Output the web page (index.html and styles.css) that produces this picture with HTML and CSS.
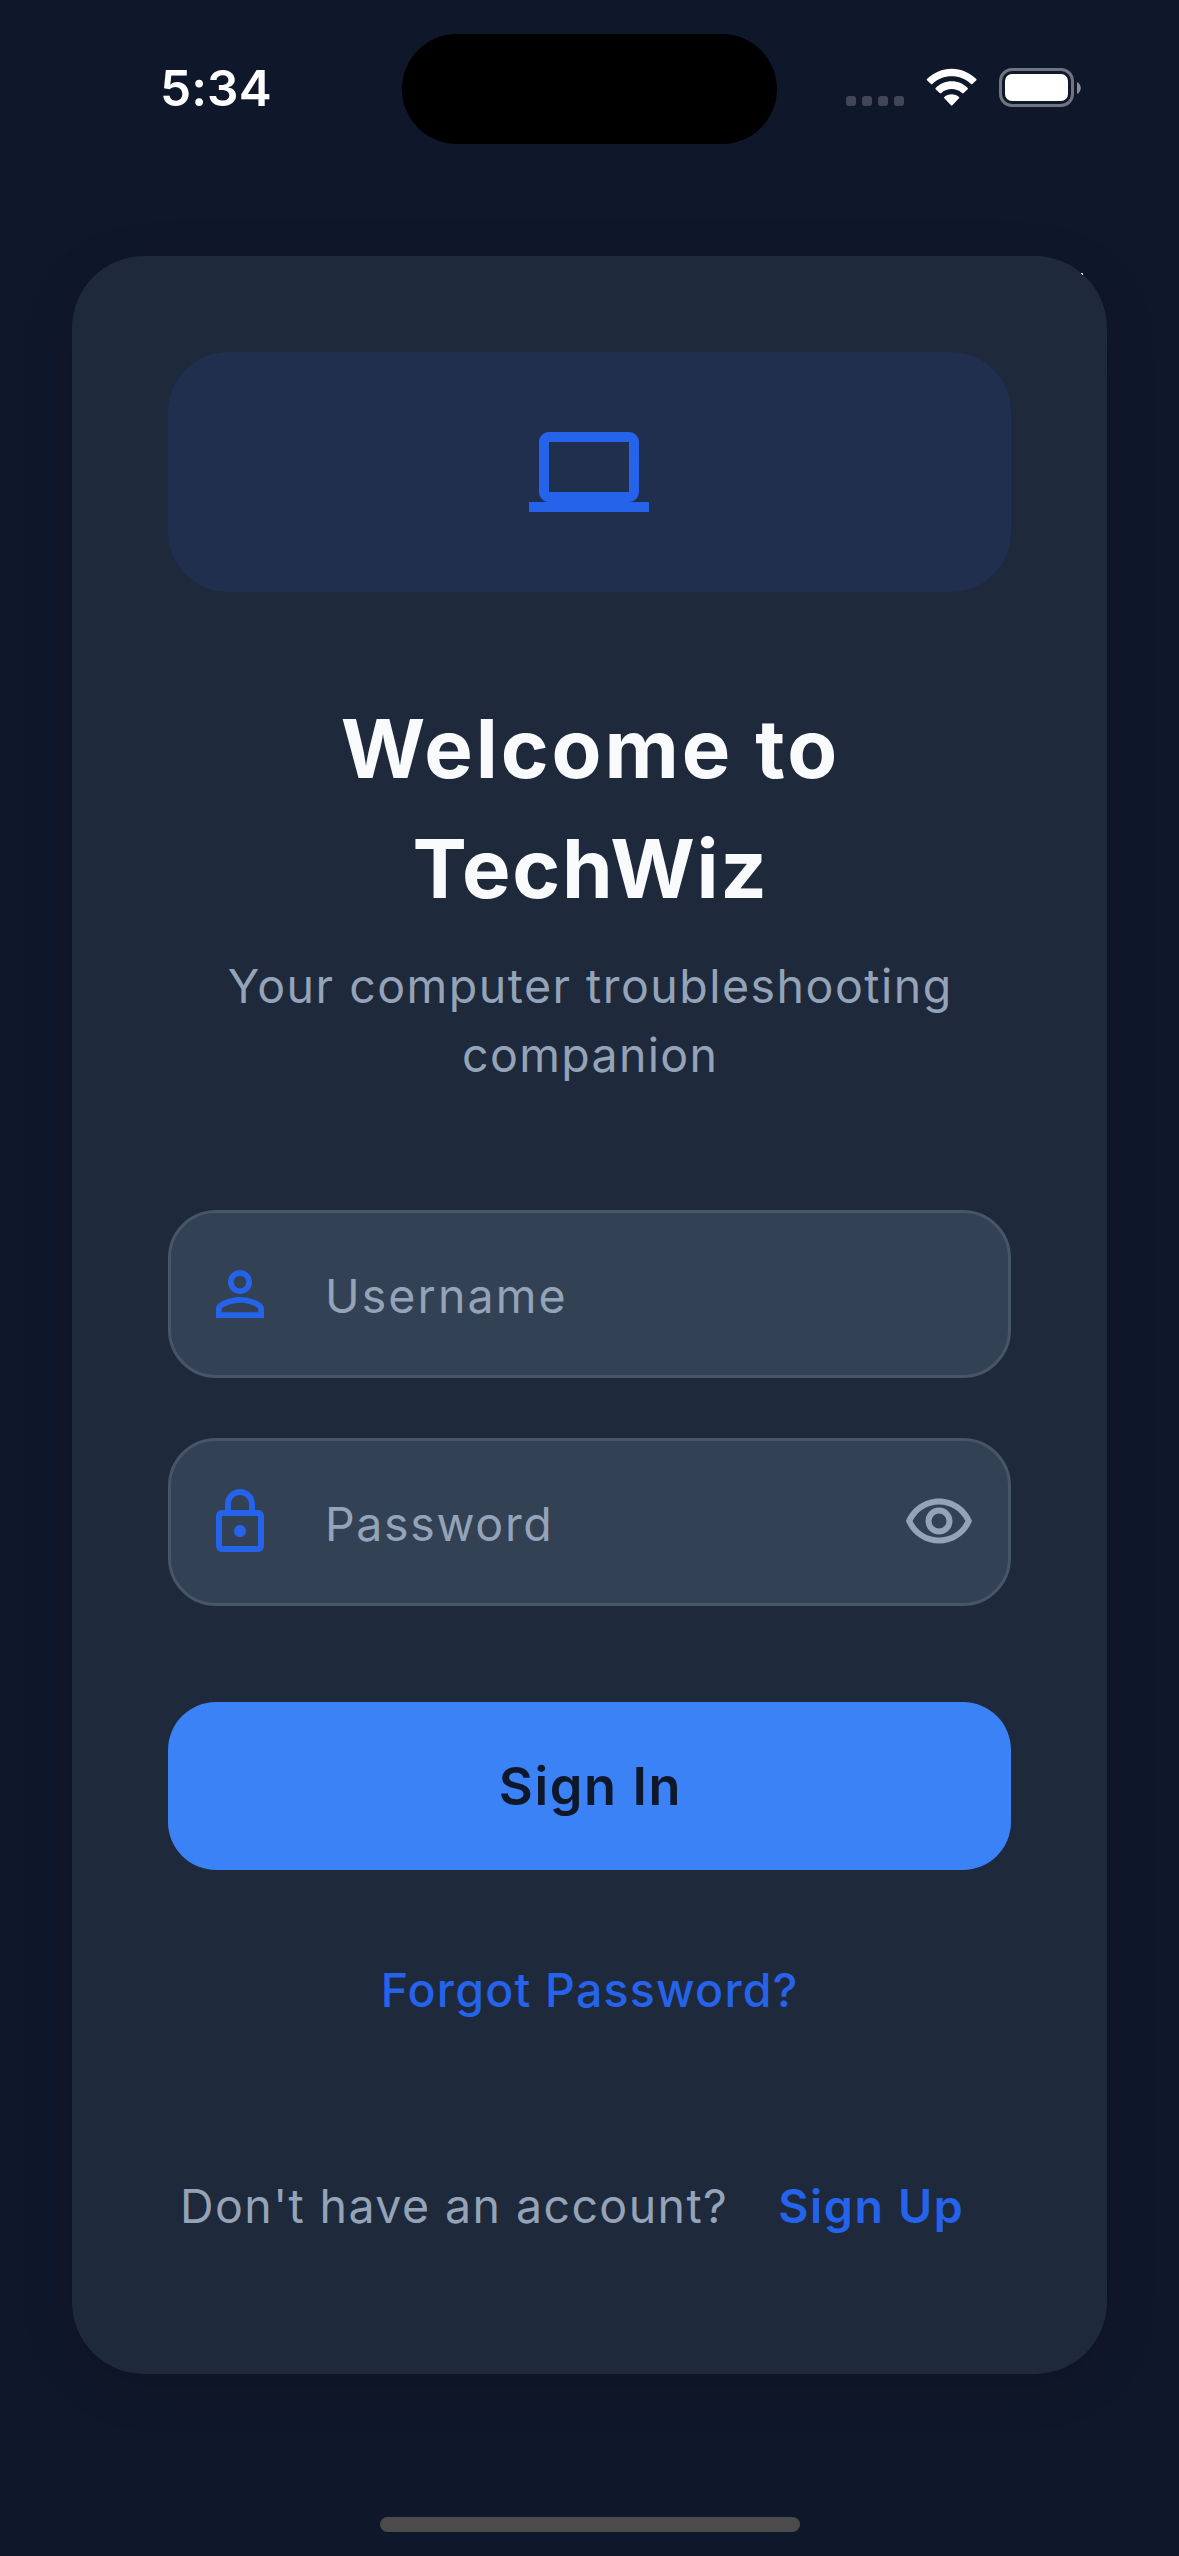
FILE: index.html
```html
<!DOCTYPE html>
<html lang="en">
<head>
<meta charset="utf-8">
<title>TechWiz – Sign In</title>
<link rel="stylesheet" href="styles.css">
</head>
<body>
<div class="screen">
  <header class="status-bar">
    <span class="time">5:34</span>
    <span class="island"></span>
    <span class="cellular"><i></i><i></i><i></i><i></i></span>
    <svg class="wifi" viewBox="438 145 153 114" aria-hidden="true">
      <path d="M441 178C461 158 487 147 515 147S569 158 589 178Q591 180 589 182L577 193Q575 195 572 192C557 178 537 170 515 170S473 178 458 192Q455 195 453 193L441 182Q439 180 441 178Z"/>
      <path d="M467 205C479 193 496 185 515 185S551 193 563 205Q565 207 563 209L551 220Q548 222 545 219C537 212 526 208 515 208S493 212 485 219Q482 222 479 220L467 209Q465 207 467 205Z"/>
      <path d="M493 232C505 221 525 221 537 232Q539 234 537 236L517 257Q515 259 513 257L493 236Q491 234 493 232Z"/>
    </svg>
    <span class="battery"><span class="battery-body"><span class="battery-level"></span></span><svg class="battery-cap" viewBox="0 0 4 12"><path d="M0 0C5 2 5 10 0 12Z"/></svg></span>
  </header>

  <main class="card">
    <span class="speck"></span>
    <div class="hero">
      <svg class="hero-icon" viewBox="0 0 24 24"><path d="M20 18c1.1 0 1.99-.9 1.99-2L22 6c0-1.100-.9-2-2-2H4c-1.100 0-2 .9-2 2v10c0 1.100.9 2 2 2H0v2h24v-2h-4zM4 6h16v10H4V6z"/></svg>
    </div>
    <h1 class="title"><span class="title-top">Welcome to</span><span class="title-name">TechWiz</span></h1>
    <p class="subtitle">Your computer troubleshooting<br><span class="subtitle-end">companion</span></p>

    <div class="fields">
      <div class="field">
        <svg class="icon" viewBox="0 0 24 24"><path d="M12 5.900a2.100 2.100 0 1 1 0 4.200 2.100 2.100 0 0 1 0-4.200m0 9c2.970 0 6.100 1.460 6.100 2.100v1.100H5.900V17c0-.64 3.130-2.100 6.100-2.100M12 4C9.790 4 8 5.790 8 8s1.790 4 4 4 4-1.790 4-4-1.790-4-4-4zm0 9c-2.670 0-8 1.340-8 4v3h16v-3c0-2.660-5.330-4-8-4z"/></svg>
        <span class="placeholder placeholder-user">Username</span>
      </div>
      <div class="field">
        <svg class="icon" viewBox="0 0 24 24"><path d="M18 8h-1V6c0-2.760-2.240-5-5-5S7 3.240 7 6v2H6c-1.100 0-2 .9-2 2v10c0 1.100.9 2 2 2h12c1.100 0 2-.9 2-2V10c0-1.100-.9-2-2-2zM9 6c0-1.660 1.340-3 3-3s3 1.340 3 3v2H9V6zm9 14H6V10h12v10zm-6-3c1.100 0 2-.9 2-2s-.9-2-2-2-2 .9-2 2 .9 2 2 2z"/></svg>
        <span class="placeholder">Password</span>
        <svg class="icon icon-eye" viewBox="0 0 24 24"><path d="M12 6.500c3.790 0 7.170 2.130 8.820 5.500-1.650 3.370-5.020 5.500-8.820 5.500S4.830 15.370 3.180 12C4.830 8.630 8.210 6.500 12 6.500m0-2C7 4.500 2.730 7.610 1 12c1.730 4.390 6 7.500 11 7.500s9.270-3.110 11-7.500c-1.730-4.390-6-7.500-11-7.500zm0 5a2.500 2.500 0 0 1 0 5 2.500 2.500 0 0 1 0-5m0-2c-2.480 0-4.500 2.020-4.500 4.500s2.020 4.500 4.500 4.500 4.500-2.020 4.500-4.500-2.020-4.500-4.500-4.500z"/></svg>
      </div>
    </div>

    <button class="sign-in" type="button">Sign In</button>
    <a class="forgot">Forgot Password?</a>
    <div class="register"><span class="question">Don't have an account?</span><a class="sign-up">Sign Up</a></div>
  </main>
  <div class="home-indicator"></div>
</div>
</body>
</html>
```
FILE: styles.css
```css
* { box-sizing: border-box; }

body {
  margin: 0;
  background: #0f172a;
  font-family: Inter, "Liberation Sans", sans-serif;
  font-size: 46.5px;
}

.screen {
  width: 1179px;
  height: 2556px;
  display: flex;
  flex-direction: column;
  align-items: center;
  overflow: hidden;
}

/* Status bar */
.status-bar {
  width: 100%;
  height: 256px;
  padding: 34px 0 0 160px;
  display: flex;
  align-items: flex-start;
}
.time {
  width: 242px;
  padding-top: 24px;
  color: #fff;
  font-size: 49.5px;
  font-weight: 600;
  line-height: 60px;
  letter-spacing: .1px;
}
.island {
  width: 375px;
  height: 110px;
  border-radius: 55px;
  background: #000;
}
.cellular {
  display: flex;
  gap: 6px;
  margin: 62px 0 0 69px;
}
.cellular i {
  width: 10px;
  height: 10px;
  border-radius: 3px;
  background: #414656;
}
.wifi {
  width: 51px;
  height: 38px;
  margin: 34px 0 0 22px;
  fill: #fff;
}
.battery {
  display: flex;
  align-items: center;
  gap: 3px;
  margin: 34px 0 0 22px;
}
.battery-body {
  width: 75px;
  height: 39px;
  padding: 3px;
  border: 3px solid #6f7480;
  border-radius: 13px;
}
.battery-level {
  display: block;
  height: 27px;
  border-radius: 7px;
  background: #fff;
}
.battery-cap {
  width: 4px;
  height: 12px;
  fill: #878b95;
}

/* Sign-in card */
.card {
  position: relative;
  width: 1035px;
  height: 2118px;
  padding: 96px;
  display: flex;
  flex-direction: column;
  flex-shrink: 0;
  border-radius: 72px;
  background: #1e293b;
  box-shadow: 0 12px 54px rgba(0, 0, 0, .1);
}
.speck {
  position: absolute;
  top: 17px;
  right: 24px;
  width: 2px;
  height: 2px;
  background: #dfe2e6;
  clip-path: polygon(0 0, 100% 0, 100% 100%, 50% 100%, 50% 50%, 0 50%);
}
.hero {
  height: 240px;
  display: grid;
  place-items: center;
  border-radius: 60px;
  background: #1f2f4d;
}
.hero-icon {
  width: 120px;
  height: 120px;
  margin-right: 1px;
  fill: #2563eb;
}
.title {
  margin: 96.5px 0 0;
  color: #f8fafc;
  font-size: 81.5px;
  font-weight: 700;
  line-height: 120px;
  text-align: center;
}
.title span { display: block; }
.title-top { padding-left: 2px; letter-spacing: 2.9px; }
.title-name { padding-left: 2px; letter-spacing: 1.67px; }
.subtitle {
  margin: 23.5px 0 0;
  padding-left: 1.5px;
  color: #94a3b8;
  line-height: 69px;
  letter-spacing: 1.48px;
  text-align: center;
  white-space: nowrap;
}
.subtitle-end { letter-spacing: 1.33px; }

.fields {
  display: grid;
  gap: 60px;
  margin-top: 120px;
}
.field {
  height: 168px;
  padding: 0 33px;
  display: flex;
  align-items: center;
  border: 3px solid #475569;
  border-radius: 48px;
  background: #334155;
}
.icon {
  width: 72px;
  height: 72px;
  flex: none;
  fill: #2563eb;
}
.icon-eye { margin-bottom: 2px; fill: #94a3b8; }
.placeholder {
  flex: 1;
  padding: 3px 0 0 49px;
  color: #94a3b8;
  letter-spacing: 1.65px;
}
.placeholder-user { letter-spacing: 2.1px; }

.sign-in {
  height: 168px;
  margin-top: 96px;
  padding: 0 0 0 2px;
  border: 0;
  border-radius: 48px;
  background: #3b82f6;
  color: #0f172a;
  font: 600 52.3px/63px Inter, "Liberation Sans", sans-serif;
  letter-spacing: 1.61px;
}
.forgot {
  margin-top: 83.5px;
  color: #2563eb;
  font-weight: 500;
  line-height: 72px;
  letter-spacing: 1.21px;
  text-align: center;
}
.register {
  display: flex;
  gap: 50px;
  margin-top: 144px;
  padding-left: 12px;
  line-height: 72px;
  white-space: nowrap;
}
.question { color: #94a3b8; letter-spacing: 1.41px; }
.sign-up { color: #2563eb; font-weight: 600; letter-spacing: 1.6px; }

.home-indicator {
  width: 420px;
  height: 15px;
  margin-top: 143px;
  flex-shrink: 0;
  border-radius: 7.5px;
  background: #4b4b4b;
}
```
